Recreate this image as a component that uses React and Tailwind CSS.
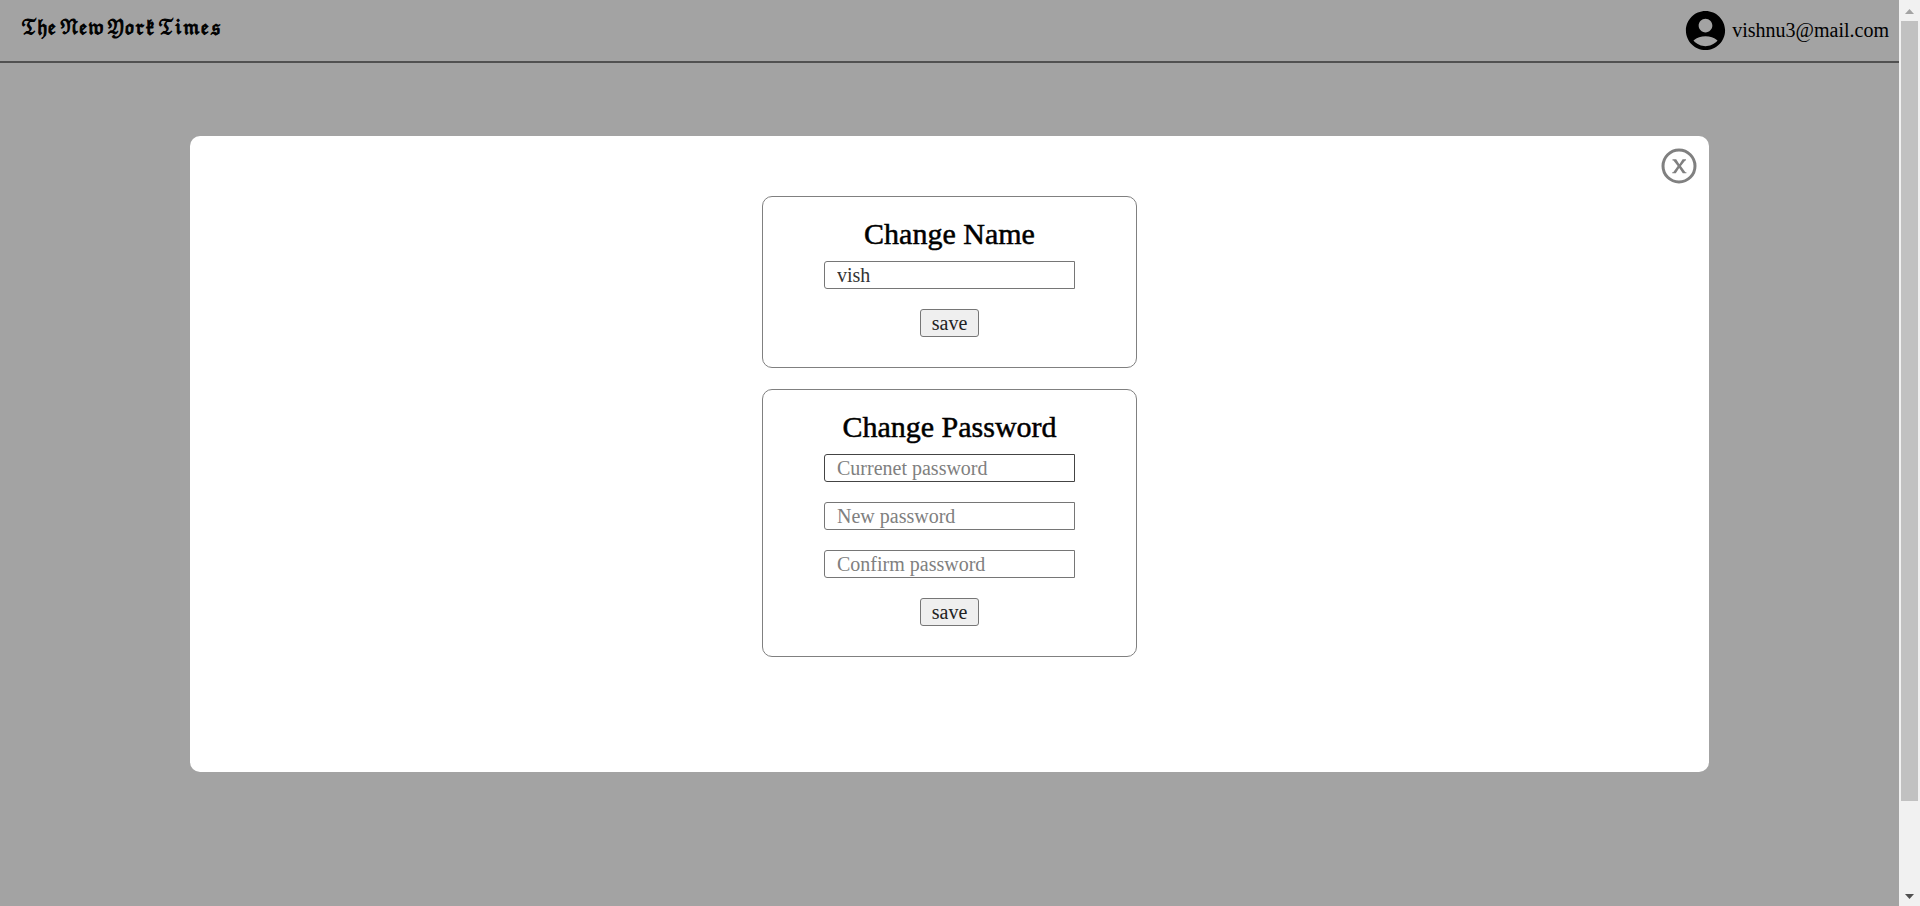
import { MdAccountCircle } from "react-icons/md";

function Field({ label, type = "password", defaultValue, placeholder, tone = "border-[#767676]" }) {
  return (
    <input
      aria-label={label}
      type={type}
      defaultValue={defaultValue}
      placeholder={placeholder}
      className={`h-7 w-[251px] rounded-l-[3px] border bg-white px-3 text-[20px] leading-6 text-[#333] outline-none placeholder:text-[#808080] ${tone}`}
    />
  );
}

function Card({ title, children }) {
  return (
    <form
      onSubmit={(e) => e.preventDefault()}
      className="flex w-[375px] flex-col items-center rounded-[10px] border border-[#808080] pt-5 pb-[30px]"
    >
      <h2 className="mb-2.5 text-[30px] leading-[34px] font-normal text-black [-webkit-text-stroke:0.5px_#000]">{title}</h2>
      <div className="flex w-full flex-col items-center gap-5">
        {children}
        <button
          type="submit"
          className="h-7 rounded-[3px] border border-[#767676] bg-[#efefef] px-[11px] text-[20px] leading-6 text-[#222]"
        >
          save
        </button>
      </div>
    </form>
  );
}

function ScrollRail() {
  return (
    <div aria-hidden="true" className="flex w-[21px] shrink-0 flex-col items-center bg-[#f1f1f1]">
      <svg className="h-[21px] w-[21px] shrink-0" viewBox="0 0 21 21">
        <path d="M6 14 L10.5 9 L15 14 Z" fill="#a3a3a3" />
      </svg>
      <div className="w-[17px] grow-[780] bg-[#c1c1c1]" />
      <div className="grow-[84]" />
      <svg className="h-[21px] w-[21px] shrink-0" viewBox="0 0 21 21">
        <path d="M6 9 L15 9 L10.5 14 Z" fill="#505050" />
      </svg>
    </div>
  );
}

export default function App() {
  return (
    <div className="flex h-screen bg-[#a3a3a3] font-['Liberation_Serif',serif] text-black">
      <div className="flex min-w-0 flex-1 flex-col">
        <header className="flex h-[63px] shrink-0 items-center justify-between border-b-2 border-[#515151] pr-2.5 pl-[21px]">
          <a
            href="#"
            aria-label="The New York Times"
            className="flex gap-[3px] pb-1 text-[18px] leading-8 text-black font-['DejaVu_Math_TeX_Gyre','DejaVu_Serif',serif] [-webkit-text-stroke:1px_#000]"
          >
            <span>𝔗𝔥𝔢</span>
            <span>𝔑𝔢𝔴</span>
            <span>𝔜𝔬𝔯𝔨</span>
            <span>𝔗𝔦𝔪𝔢𝔰</span>
          </a>
          <a href="#" className="flex items-center gap-[3px] text-[20px] leading-6 text-black">
            <MdAccountCircle className="size-[47px]" />
            <span className="pb-0.5">vishnu3@mail.com</span>
          </a>
        </header>
        <main className="flex flex-1 flex-col px-[10%] pt-[73px] pb-[134px]">
          <section role="dialog" aria-label="Account settings" className="relative flex flex-1 flex-col items-center gap-[21px] rounded-[10px] bg-white pt-[60px]">
            <button type="button" aria-label="Close" className="absolute top-3 right-3 size-9">
              <svg viewBox="0 0 36 36" className="size-full">
                <circle cx="18" cy="18" r="16" fill="none" stroke="#808080" strokeWidth="3" />
                <path
                  d="M11.5 11.2 H15.2 L18.4 16.2 L21.6 11.2 H25 V12.4 H24.2 L19.9 18.1 L24.4 24.2 H25.4 V25.3 H21.8 L18.2 20 L14.8 25.3 H11.2 V24.2 H12.2 L16.7 18.1 L12.4 12.4 H11.5 Z"
                  fill="#808080"
                />
              </svg>
            </button>
            <Card title="Change Name">
              <Field label="Name" type="text" defaultValue="vish" />
            </Card>
            <Card title="Change Password">
              <Field label="Current password" placeholder="Currenet password" tone="border-[#444]" />
              <Field label="New password" placeholder="New password" />
              <Field label="Confirm password" placeholder="Confirm password" />
            </Card>
          </section>
        </main>
      </div>
      <ScrollRail />
    </div>
  );
}
